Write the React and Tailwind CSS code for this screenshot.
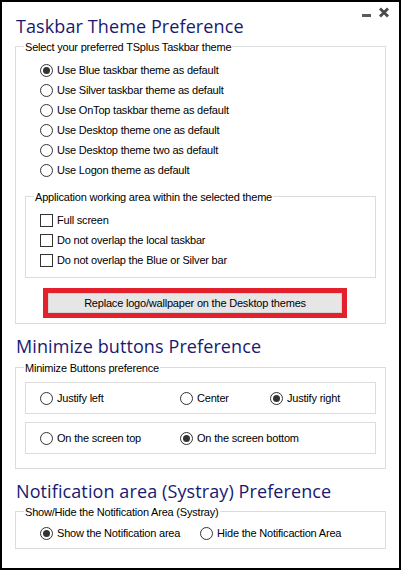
import { useState } from 'react'

const body = { fontFamily: '"Liberation Sans", Arial, sans-serif' }
const head = { fontFamily: '"Open Sans", "Noto Sans", sans-serif' }

function Title({ children, className = '' }) {
  return (
    <h2 style={head} className={`pl-[1px] text-[18px] leading-[24px] tracking-[0.1px] text-[#191970] ${className}`}>
      {children}
    </h2>
  )
}

function Legend({ children, className = 'ml-[8px]' }) {
  return (
    <legend className={`${className} px-[1px] pt-[3px] text-[11px] leading-[13px] tracking-[-0.2px] text-black`}>
      {children}
    </legend>
  )
}

function Radio({ checked, label, onClick, className = '' }) {
  return (
    <div onClick={onClick} className={`flex h-[20px] items-center gap-[4px] cursor-default ${className}`}>
      <span className="flex h-[13px] w-[13px] shrink-0 items-center justify-center rounded-full border border-[#333] bg-white">
        {checked && <span className="h-[7px] w-[7px] rounded-full bg-[#333]" />}
      </span>
      <span className="text-[11px] tracking-[-0.2px] text-black">{label}</span>
    </div>
  )
}

function Check({ checked, label, onClick }) {
  return (
    <div onClick={onClick} className="flex h-[20px] items-center gap-[4px] cursor-default">
      <span className="flex h-[13px] w-[13px] shrink-0 items-center justify-center border border-[#333] bg-white text-[10px] leading-none">
        {checked ? '✓' : ''}
      </span>
      <span className="text-[11px] tracking-[-0.2px] text-black">{label}</span>
    </div>
  )
}

export default function App() {
  const [theme, setTheme] = useState(0)
  const [area, setArea] = useState([false, false, false])
  const [justify, setJustify] = useState(2)
  const [pos, setPos] = useState(1)
  const [tray, setTray] = useState(0)

  const themes = [
    'Use Blue taskbar theme as default',
    'Use Silver taskbar theme as default',
    'Use OnTop taskbar theme as default',
    'Use Desktop theme one as default',
    'Use Desktop theme two as default',
    'Use Logon theme as default'
  ]
  const areas = ['Full screen', 'Do not overlap the local taskbar', 'Do not overlap the Blue or Silver bar']

  return (
    <div style={body} className="relative h-[570px] w-[401px] border-2 border-black bg-white">
      {/* window controls */}
      <div className="absolute right-[10px] top-[4px] flex items-end gap-[8px]">
        <svg width="9" height="12" viewBox="0 0 9 12">
          <rect x="0" y="8" width="9" height="3" fill="#5a5a5a" />
        </svg>
        <svg width="10" height="11" viewBox="0 0 10 11">
          <path d="M1 1.5 L9 9.5 M9 1.5 L1 9.5" stroke="#4a4a4a" strokeWidth="2.8" strokeLinecap="butt" />
        </svg>
      </div>

      <div className="pl-[13px] pt-[12px]">
        <Title>Taskbar Theme Preference</Title>
        <fieldset className="w-[371px] border border-[#dcdcdc] pb-[5px]">
          <Legend>Select your preferred TSplus Taskbar theme</Legend>
          <div className="pl-[24px] pt-[6px]">
            {themes.map((t, i) => (
              <Radio key={t} label={t} checked={theme === i} onClick={() => setTheme(i)} />
            ))}
          </div>
          <fieldset className="ml-[9px] mt-[8px] w-[351px] border border-[#dcdcdc] pb-[7px]">
            <Legend>Application working area within the selected theme</Legend>
            <div className="pl-[14px] pt-[6px]">
              {areas.map((a, i) => (
                <Check
                  key={a}
                  label={a}
                  checked={area[i]}
                  onClick={() => setArea(v => v.map((x, j) => (j === i ? !x : x)))}
                />
              ))}
            </div>
          </fieldset>
          <div className="ml-[27px] mt-[10px] h-[30px] w-[304px] border-[5px] border-[#e3202b]">
            <button className="flex h-full w-full items-center justify-center border border-[#d4d4d4] bg-[#e6e6e6] text-[11px] tracking-[-0.2px] text-black">
              Replace logo/wallpaper on the Desktop themes
            </button>
          </div>
        </fieldset>

        <Title className="mt-[10px]">Minimize buttons Preference</Title>
        <fieldset className="mt-[1px] w-[371px] border border-[#dcdcdc] pb-[14px]">
          <Legend>Minimize Buttons preference</Legend>
          <div className="ml-[9px] mt-[7px] flex h-[32px] w-[351px] items-center border border-[#dcdcdc] pl-[14px]">
            <Radio className="w-[140px]" label="Justify left" checked={justify === 0} onClick={() => setJustify(0)} />
            <Radio className="w-[90px]" label="Center" checked={justify === 1} onClick={() => setJustify(1)} />
            <Radio label="Justify right" checked={justify === 2} onClick={() => setJustify(2)} />
          </div>
          <div className="ml-[9px] mt-[8px] flex h-[32px] w-[351px] items-center border border-[#dcdcdc] pl-[14px]">
            <Radio className="w-[140px]" label="On the screen top" checked={pos === 0} onClick={() => setPos(0)} />
            <Radio label="On the screen bottom" checked={pos === 1} onClick={() => setPos(1)} />
          </div>
        </fieldset>

        <Title className="mt-[10px]">Notification area (Systray) Preference</Title>
        <fieldset className="w-[371px] border border-[#dcdcdc] pb-[5px]">
          <Legend>Show/Hide the Notification Area (Systray)</Legend>
          <div className="flex pl-[24px] pt-[4px]">
            <Radio className="w-[160px]" label="Show the Notification area" checked={tray === 0} onClick={() => setTray(0)} />
            <Radio label="Hide the Notificaction Area" checked={tray === 1} onClick={() => setTray(1)} />
          </div>
        </fieldset>
      </div>
    </div>
  )
}
